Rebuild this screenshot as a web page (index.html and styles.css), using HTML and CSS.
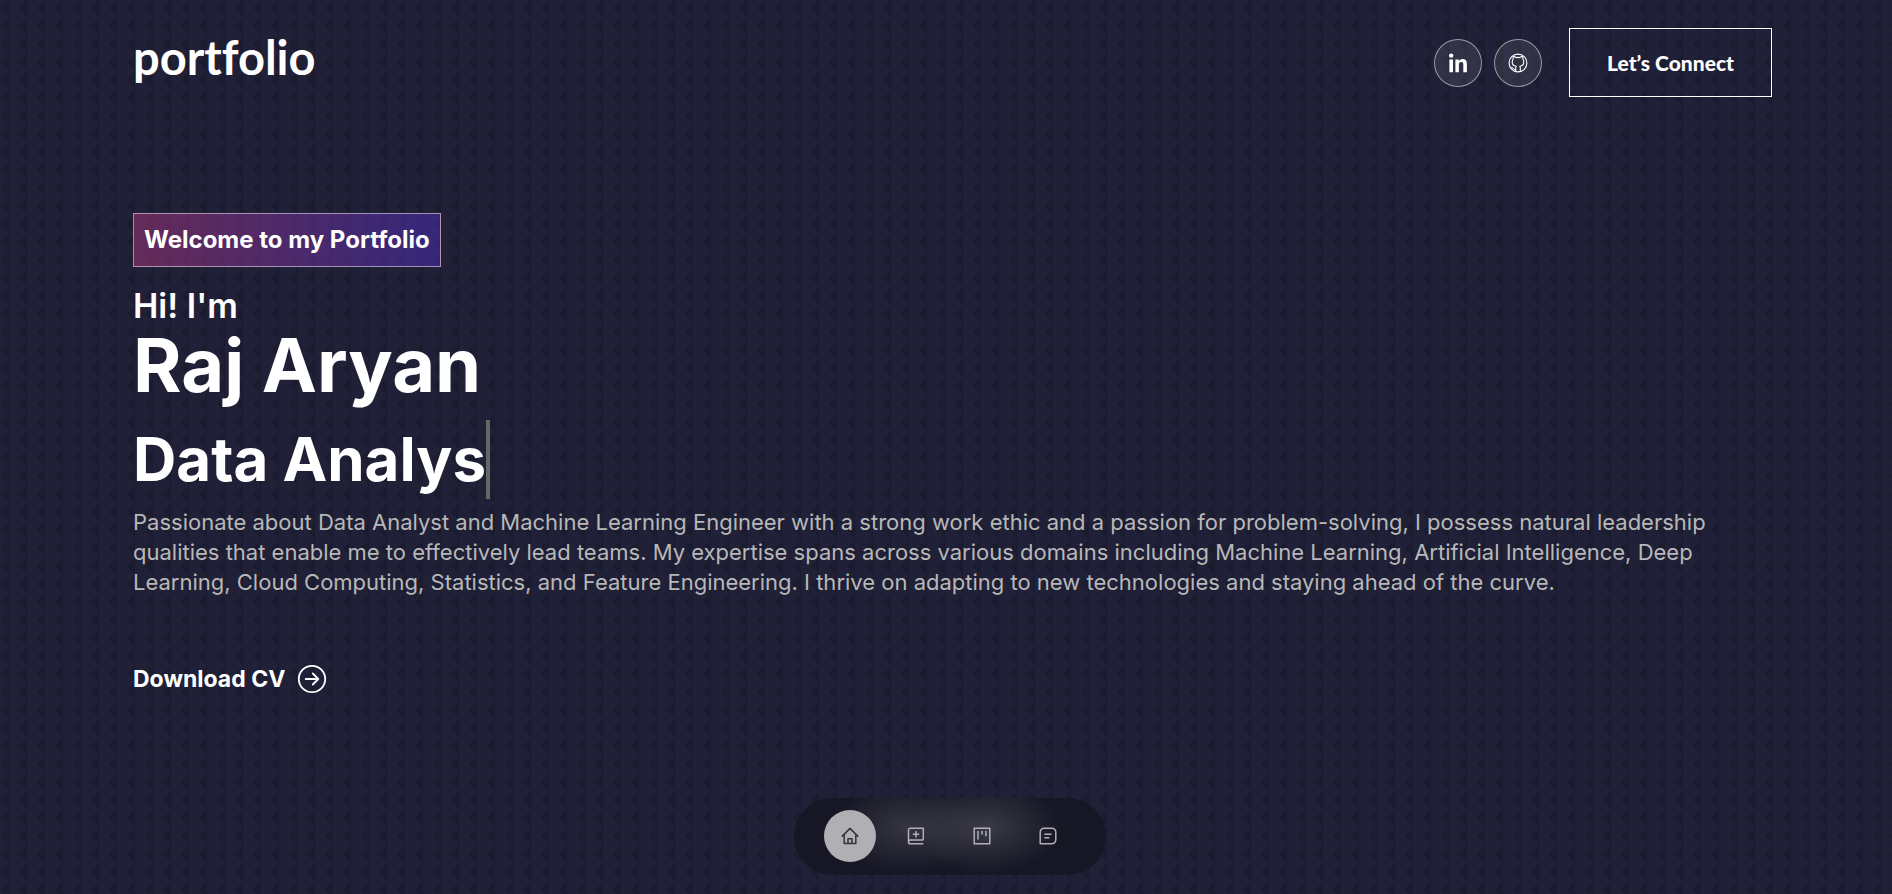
FILE: index.html
```html
<!DOCTYPE html>
<html lang="en">
<head>
<meta charset="utf-8">
<meta name="viewport" content="width=device-width, initial-scale=1">
<title>Portfolio</title>
<link rel="stylesheet" href="styles.css">
</head>
<body>
<header class="navbar">
  <a class="brand" href="#home">portfolio</a>
  <div class="nav-actions">
    <div class="social">
      <a href="#linkedin" aria-label="LinkedIn">
        <svg width="18" height="20" viewBox="0 0 18 20" fill="#fff"><circle cx="2.2" cy="2.6" r="2.2"/><path d="M.4 6.4h3.6v12.8H.4zM6.4 6.4h3.4v1.8c.6-1.1 1.9-2.1 3.8-2.1 3.6 0 4.3 2.4 4.3 5.5v7.6h-3.6v-6.8c0-1.6 0-3.3-2.1-3.3s-2.3 1.6-2.3 3.2v6.9H6.4z"/></svg>
      </a>
      <a href="#github" aria-label="GitHub">
        <svg width="20" height="20" viewBox="0 0 20 20" fill="none" stroke="#fff" stroke-width="1.1" stroke-linejoin="round" stroke-linecap="round"><circle cx="10" cy="10" r="8.9"/><path d="M7.7 18.4v-3.6c0-.7.2-1.2.6-1.6-2.7-.3-4.1-1.600-4.100-4.300 0-1.100.4-2 1-2.700-.3-.9-.2-1.900.1-2.800 1 0 2 .6 2.700 1.200a9 9 0 0 1 4 0c.7-.6 1.700-1.200 2.700-1.200.3.9.4 1.900.1 2.800.6.7 1 1.600 1 2.700 0 2.700-1.400 4-4.100 4.300.4.4.6.900.6 1.600v3.600M7.700 16.400c-1.600.4-2.300-.3-2.800-1.100-.3-.5-.7-.9-1.200-1"/></svg>
      </a>
    </div>
    <button class="connect" type="button">Let’s Connect</button>
  </div>
</header>

<main class="hero" id="home">
  <span class="tagline">Welcome to my Portfolio</span>
  <h1 class="title"><span class="greeting">Hi! I'm</span> <span class="name">Raj Aryan</span></h1>
  <h2 class="role"><span class="typed">Data Analys</span></h2>
  <p class="bio">Passionate about Data Analyst and Machine Learning Engineer with a strong work ethic and a passion for problem-solving, I possess natural leadership qualities that enable me to effectively lead teams. My expertise spans across various domains including Machine Learning, Artificial Intelligence, Deep Learning, Cloud Computing, Statistics, and Feature Engineering. I thrive on adapting to new technologies and staying ahead of the curve.</p>
  <a class="download" href="#cv">Download CV
    <svg width="30" height="30" viewBox="0 0 30 30" fill="none" stroke="#fff" stroke-width="1.8" stroke-linecap="round" stroke-linejoin="round"><circle cx="15" cy="15" r="13.2"/><path d="M8.700 15h12.600M15.800 9.500l5.500 5.500-5.500 5.500"/></svg>
  </a>
</main>

<div class="dock-wrap">
  <nav class="dock" aria-label="Sections">
    <a class="active" href="#home" aria-label="Home">
      <svg width="18" height="18" viewBox="0 0 18 18"><path d="M.8 9.600 9 1.400l8.200 8.200M3.200 7.600v8.800h11.600V7.600M7 16.400v-4.600h4v4.600"/></svg>
    </a>
    <a href="#skills" aria-label="Skills">
      <svg width="18" height="18" viewBox="0 0 18 18"><path d="M16.300 12.800V1.200H3.200c-1 0-1.700.7-1.700 1.700v12.200M16.300 13H3.500c-2.600 0-2.600 3.800 0 3.800h12.800M9 4v6.400M5.800 7.200h6.400"/></svg>
    </a>
    <a href="#projects" aria-label="Projects">
      <svg width="18" height="18" viewBox="0 0 18 18"><path d="M1.200 1.200h15.600v15.600H1.200zM5 4v8.600M9 4v3.400M13 4v5.200"/></svg>
    </a>
    <a href="#contact" aria-label="Contact">
      <svg width="18" height="18" viewBox="0 0 18 18"><path d="M1.200 16.800V5.400c0-2.400 1.800-4.200 4.200-4.200h7.200c2.400 0 4.200 1.800 4.200 4.200v7.200c0 2.400-1.800 4.200-4.200 4.200zM5.400 7.200h7.200M5.400 10.800h5"/></svg>
    </a>
  </nav>
</div>
</body>
</html>
```

FILE: styles.css
```css
* { box-sizing: border-box; }

body {
  margin: 0;
  min-height: 100vh;
  color: #fff;
  font-family: Inter, "Open Sans", sans-serif;
  background-color: #202037;
  background-image:
    linear-gradient(90deg, transparent 8px, #1b1b30 8px, #1b1b30 9px, #202038 9px),
    conic-gradient(from 45deg at 0 50%, #1c1c30 90deg, transparent 0);
  background-size: 18px 18px;
  background-position: 0 -1px;
}

a { color: inherit; text-decoration: none; }

.navbar {
  display: flex;
  align-items: center;
  justify-content: space-between;
  padding: 28px 120px 0 133px;
}

.brand {
  padding-bottom: 12px;
  font-family: Lato, sans-serif;
  font-size: 47px;
  line-height: 56px;
  font-weight: 700;
  font-variant-ligatures: none;
}

.nav-actions, .social { display: flex; align-items: center; }
.nav-actions { gap: 27px; }
.social { gap: 12px; }

.social a {
  display: grid;
  place-items: center;
  width: 48px;
  height: 48px;
  border: 1px solid rgba(255, 255, 255, .5);
  border-radius: 50%;
  background: rgba(217, 217, 217, .1);
}

.connect {
  padding: 20px 37px;
  border: 1px solid #fff;
  background: transparent;
  color: #fff;
  font: 900 21px/27px Lato, sans-serif;
}

.hero {
  display: flex;
  flex-direction: column;
  align-items: flex-start;
  padding: 116px 160px 180px 133px;
}

.tagline {
  padding: 8px 10px;
  border: 1px solid rgba(255, 255, 255, .5);
  background: linear-gradient(90deg, rgba(170, 54, 124, .5), rgba(74, 47, 189, .5));
  font-size: 24px;
  line-height: 36px;
  font-weight: 700;
}

.title, .role, .bio { margin: 0; }
.title { margin-top: 16px; }
.greeting, .name { display: block; }
.greeting { font-size: 34px; line-height: 46px; font-weight: 600; }
.name { font-size: 74px; line-height: 72px; font-weight: 700; }

.role {
  margin-top: 19px;
  font-size: 60px;
  line-height: 79px;
  font-weight: 700;
}
.typed { display: block; border-right: 4px solid #666; }

.bio {
  margin-top: 8px;
  color: #b8b8b8;
  font-size: 22px;
  line-height: 30px;
}

.download {
  display: flex;
  align-items: center;
  gap: 12px;
  margin-top: 66px;
  font-size: 23px;
  line-height: 32px;
  font-weight: 700;
}

.dock-wrap {
  position: fixed;
  right: 0;
  bottom: 19px;
  left: 8px;
  display: flex;
  justify-content: center;
}

.dock {
  display: flex;
  gap: 14px;
  padding: 12px 32px 13px 30px;
  border-radius: 40px;
  background:
    radial-gradient(ellipse 72px 46px at 36% 38%, rgba(75, 75, 85, .6), transparent),
    radial-gradient(ellipse 76px 46px at 61% 38%, rgba(75, 75, 85, .7), transparent),
    #161625;
}

.dock a {
  display: grid;
  place-items: center;
  width: 52px;
  height: 52px;
  border-radius: 50%;
  color: #b0b0b6;
}
.dock .active { background: #b0b0b4; color: #333338; }
.dock svg {
  fill: none;
  stroke: currentColor;
  stroke-width: 1.5;
  stroke-linejoin: round;
}
```
